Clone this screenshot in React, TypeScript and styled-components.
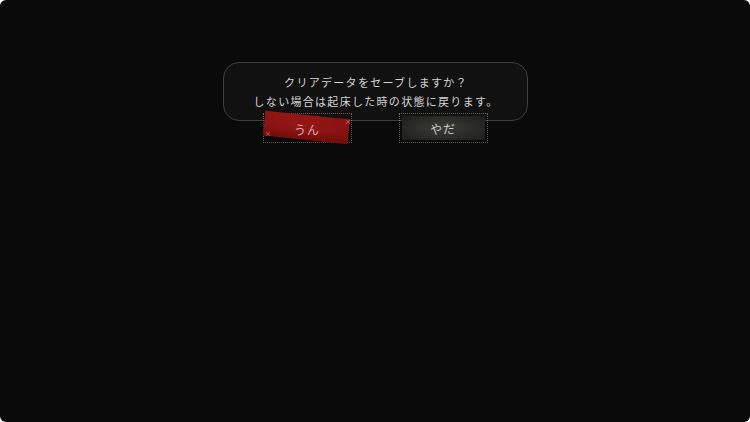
import React from "react";
import styled, { createGlobalStyle } from "styled-components";

const GlobalStyle = createGlobalStyle`
  html, body {
    margin: 0;
    padding: 0;
    background: #ffffff;
  }
  * { box-sizing: border-box; }
`;

const Screen = styled.div`
  width: 750px;
  height: 422px;
  background: #0a0a0a;
  border-radius: 6px;
  overflow: hidden;
  display: flex;
  flex-direction: column;
  align-items: center;
  padding-top: 62px;
  font-family: "Noto Sans CJK JP", "Noto Sans", sans-serif;
`;

const Dialog = styled.div`
  width: 305px;
  height: 59px;
  border: 1px solid #3e3e3e;
  border-radius: 16px;
  background: #111111;
  display: flex;
  flex-direction: column;
  align-items: center;
  justify-content: center;
  padding-left: 2px;
`;

const Line = styled.p`
  margin: 0;
  color: #d4d4d4;
  font-size: 11px;
  line-height: 19px;
  letter-spacing: 1.3px;
  white-space: nowrap;
`;

const ButtonRow = styled.div`
  display: flex;
  gap: 47px;
  margin-top: -8px;
`;

const Choice = styled.button<{ $tone: "accept" | "decline" }>`
  position: relative;
  width: 89px;
  height: 30px;
  padding: 2px;
  border: 1px dotted
    ${(p) => (p.$tone === "accept" ? "rgba(255, 190, 190, 0.4)" : "rgba(200, 200, 200, 0.42)")};
  background: ${(p) =>
    p.$tone === "accept"
      ? "transparent"
      : "radial-gradient(ellipse at 50% 50%, #3b3b39 0%, #2b2b2a 50%, #191919 100%)"};
  background-clip: content-box;
  display: flex;
  align-items: center;
  justify-content: center;
  cursor: pointer;
  font-family: inherit;
`;

/* the tilted red paper tag behind the selected choice */
const Tag = styled.span`
  position: absolute;
  left: 0px;
  top: 1px;
  width: 85px;
  height: 25px;
  transform: rotate(6deg);
  background:
    radial-gradient(ellipse at 40% 45%, rgba(255, 70, 70, 0.1) 0%, rgba(0, 0, 0, 0) 70%),
    linear-gradient(180deg, #8f1414 0%, #851111 60%, #730c0c 100%);
  box-shadow: 0 0 2px rgba(0, 0, 0, 0.6);
`;

const Mark = styled.span<{ $x: number; $y: number }>`
  position: absolute;
  left: ${(p) => p.$x}px;
  top: ${(p) => p.$y}px;
  font-size: 7px;
  line-height: 7px;
  color: rgba(255, 200, 200, 0.7);
`;

const Label = styled.span<{ $tone: "accept" | "decline" }>`
  position: relative;
  font-size: 12px;
  letter-spacing: 1px;
  color: ${(p) => (p.$tone === "accept" ? "#e2aeae" : "#cacaca")};
  margin-top: ${(p) => (p.$tone === "accept" ? "2px" : "0")};
`;

export default function App() {
  return (
    <>
      <GlobalStyle />
      <Screen>
        <Dialog>
          <Line>クリアデータをセーブしますか？</Line>
          <Line>しない場合は起床した時の状態に戻ります。</Line>
        </Dialog>
        <ButtonRow>
          <Choice $tone="accept">
            <Tag />
            <Mark $x={81} $y={4}>×</Mark>
            <Mark $x={1} $y={16}>×</Mark>
            <Label $tone="accept">うん</Label>
          </Choice>
          <Choice $tone="decline">
            <Label $tone="decline">やだ</Label>
          </Choice>
        </ButtonRow>
      </Screen>
    </>
  );
}
